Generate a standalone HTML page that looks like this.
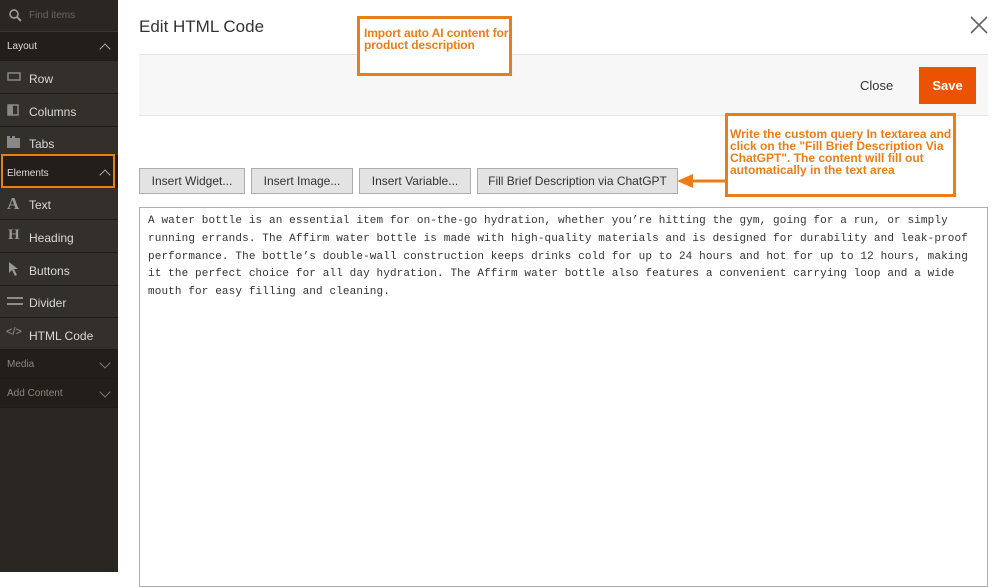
<!DOCTYPE html><html><head><style>
body{margin:0;width:1008px;height:572px;overflow:hidden;background:#fff;font-family:"Liberation Sans",sans-serif;position:relative}
.sb{position:absolute;left:0;top:0;width:118px;height:572px;background:#2a2622}
.r{position:absolute;left:0;width:118px;box-sizing:border-box;border-bottom:1px solid #1e1b18;color:#ccc;font-size:12px}
.h{background:#221e1a;color:#ddd;font-size:10px}
.it{background:#33302c;color:#d8d8d8;font-size:12px}
.r span{position:absolute;left:7px}
.it span.t{left:29px}
.ic{position:absolute;left:7px;color:#888}
.chev{position:absolute;right:9px;width:7px;height:7px;border-left:1.5px solid #aaa;border-top:1.5px solid #aaa;transform:rotate(45deg)}
.chev.d{transform:rotate(225deg)}
.btn{position:absolute;top:168px;height:26px;box-sizing:border-box;border:1px solid #adadad;background:#e3e3e3;font-size:12px;color:#333;line-height:24px;text-align:center}
.ann{position:absolute;border:3px solid #eb7d16;box-sizing:border-box;color:#eb7d16;font-weight:bold;font-size:12px;line-height:12px;background:#fff;white-space:nowrap;letter-spacing:-0.1px}
pre{margin:0;position:absolute;left:148px;top:213px;font-family:"Liberation Mono",monospace;font-size:11px;line-height:17.75px;color:#333;letter-spacing:0.12px}
</style></head><body>
<div class="sb">
<div class="r" style="top:0;height:32px;background:#2a2622;border-bottom:1px solid #3a3632"><svg style="position:absolute;left:9px;top:9px" width="13" height="13"><circle cx="5" cy="5" r="4" stroke="#999" stroke-width="1.7" fill="none"/><path d="M8 8L12 12" stroke="#999" stroke-width="2"/></svg><span style="left:29px;top:10px;font-size:10px;color:#666">Find items</span></div>
<div class="r h" style="top:32px;height:29px"><span style="top:9px">Layout</span><i class="chev" style="top:13px"></i></div>
<div class="r it" style="top:61px;height:33px"><svg class="ic" style="top:11px" width="14" height="10"><rect x="1" y="1" width="12" height="7" fill="none" stroke="#888" stroke-width="1.5"/></svg><span class="t" style="top:11px">Row</span></div>
<div class="r it" style="top:94px;height:33px"><svg class="ic" style="top:10px" width="12" height="12"><rect x="1" y="1" width="10" height="10" fill="none" stroke="#888" stroke-width="1.5"/><rect x="1" y="1" width="5" height="10" fill="#888"/></svg><span class="t" style="top:11px">Columns</span></div>
<div class="r it" style="top:127px;height:29px"><svg class="ic" style="top:9px" width="13" height="12"><rect x="0" y="2" width="13" height="10" fill="#888"/><rect x="0" y="0" width="3" height="3" fill="#888"/><rect x="5" y="0" width="3" height="3" fill="#888"/></svg><span class="t" style="top:10px">Tabs</span></div>
<div class="r h" style="top:156px;height:32px"><span style="top:12px">Elements</span><i class="chev" style="top:15px"></i></div>
<div style="position:absolute;left:1px;top:154px;width:114px;height:34px;box-sizing:border-box;border:2px solid #eb7d16"></div>
<div class="r it" style="top:188px;height:32px"><span style="left:7px;top:6px;font-family:'Liberation Serif';font-size:17px;color:#999;font-weight:bold">A</span><span class="t" style="top:10px">Text</span></div>
<div class="r it" style="top:220px;height:33px"><span style="left:8px;top:7px;font-family:'Liberation Serif';font-size:15px;color:#999;font-weight:bold">H</span><span class="t" style="top:11px">Heading</span></div>
<div class="r it" style="top:253px;height:33px"><svg class="ic" style="top:8px" width="12" height="16"><path d="M2 1L2 12L5 9L8 15L10 14L7 8L11 8Z" fill="#999"/></svg><span class="t" style="top:11px">Buttons</span></div>
<div class="r it" style="top:286px;height:32px"><svg class="ic" style="top:11px" width="16" height="9"><path d="M0 1H16M0 7H16" stroke="#999" stroke-width="1.8"/></svg><span class="t" style="top:10px">Divider</span></div>
<div class="r it" style="top:318px;height:32px"><span style="left:6px;top:8px;font-size:11px;color:#999">&lt;/&gt;</span><span class="t" style="top:11px">HTML Code</span></div>
<div class="r h" style="top:350px;height:29px;color:#888"><span style="top:9px">Media</span><i class="chev d" style="top:9px;border-color:#777"></i></div>
<div class="r h" style="top:379px;height:29px;color:#888"><span style="top:9px">Add Content</span><i class="chev d" style="top:9px;border-color:#777"></i></div>
</div>
<div style="position:absolute;left:139px;top:17px;font-size:17px;color:#333">Edit HTML Code</div>
<svg style="position:absolute;left:970px;top:16px" width="18" height="18"><path d="M1 1L17 17M17 1L1 17" stroke="#666" stroke-width="1.6"/></svg>
<div style="position:absolute;left:139px;top:54px;width:849px;height:62px;background:#f7f7f7;border-top:1px solid #e3e3e3;border-bottom:1px solid #e3e3e3;box-sizing:border-box"></div>
<div style="position:absolute;left:860px;top:78px;font-size:13px;color:#333">Close</div>
<div style="position:absolute;left:919px;top:67px;width:57px;height:37px;background:#eb5202;color:#fff;font-size:13px;font-weight:bold;line-height:37px;text-align:center">Save</div>
<div class="ann" style="left:357px;top:16px;width:155px;height:60px;padding:8px 4px;overflow:hidden">Import auto AI content for<br>product description</div>
<div class="ann" style="left:725px;top:113px;width:231px;height:84px;padding:12px 2px;letter-spacing:0">Write the custom query In textarea and<br>click on the "Fill Brief Description Via<br>ChatGPT". The content will fill out<br>automatically in the text area</div>
<svg style="position:absolute;left:677px;top:172px" width="50" height="18"><path d="M13 9H50" stroke="#eb7d16" stroke-width="3"/><path d="M0 9L16 2V16Z" fill="#eb7d16"/></svg>
<div class="btn" style="left:139px;width:106px">Insert Widget...</div>
<div class="btn" style="left:251px;width:102px">Insert Image...</div>
<div class="btn" style="left:359px;width:112px">Insert Variable...</div>
<div class="btn" style="left:477px;width:201px">Fill Brief Description via ChatGPT</div>
<div style="position:absolute;left:139px;top:207px;width:849px;height:380px;border:1px solid #adadad;box-sizing:border-box"></div>
<pre>A water bottle is an essential item for on-the-go hydration, whether you’re hitting the gym, going for a run, or simply
running errands. The Affirm water bottle is made with high-quality materials and is designed for durability and leak-proof
performance. The bottle’s double-wall construction keeps drinks cold for up to 24 hours and hot for up to 12 hours, making
it the perfect choice for all day hydration. The Affirm water bottle also features a convenient carrying loop and a wide
mouth for easy filling and cleaning.</pre>
</body></html>
